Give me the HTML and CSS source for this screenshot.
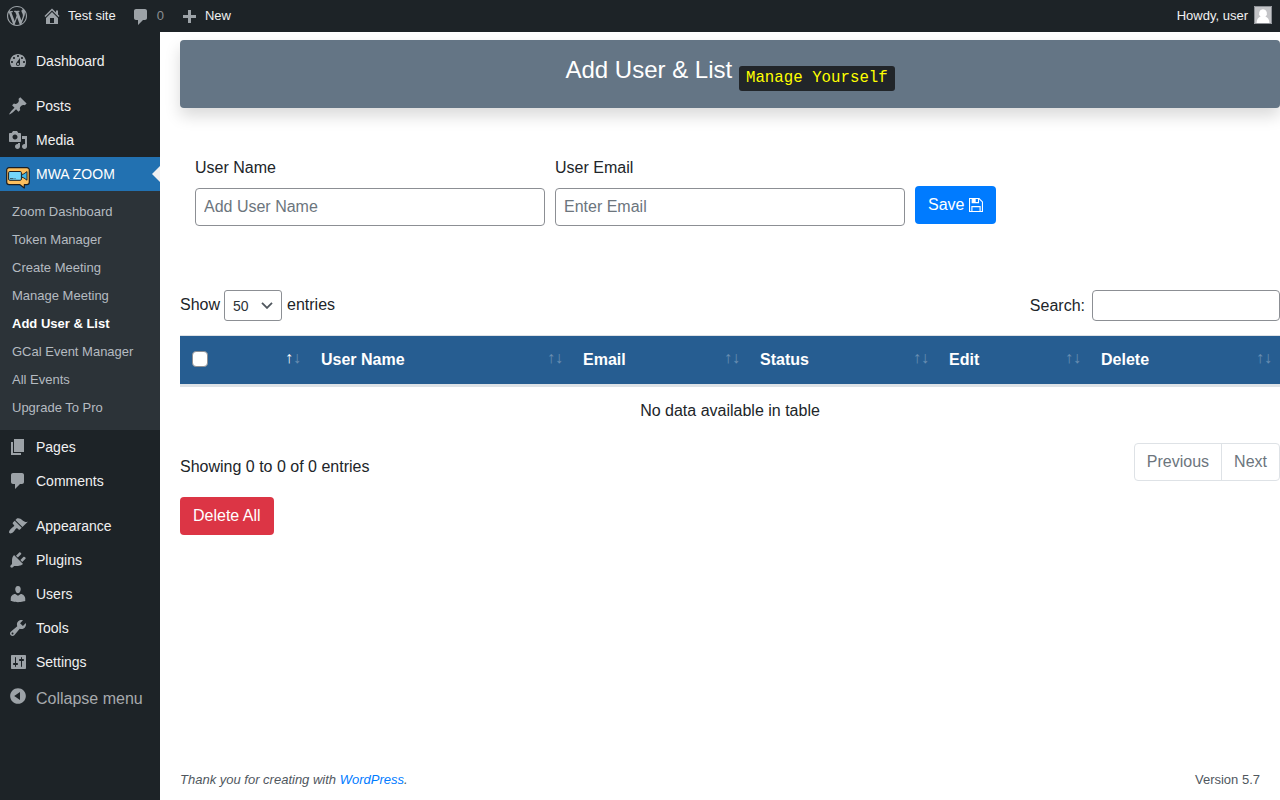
FILE: index.html
```html
<!DOCTYPE html>
<html lang="en">
<head>
<meta charset="utf-8">
<title>Add User &amp; List</title>
<link rel="stylesheet" href="styles.css">
</head>
<body>
<header class="adminbar">
  <div class="bar-left">
    <svg class="icon wp" viewBox="0 0 20 20"><path d="M20 10c0-5.51-4.49-10-10-10C4.48 0 0 4.49 0 10c0 5.52 4.48 10 10 10 5.51 0 10-4.48 10-10zM7.78 15.37L4.37 6.22c.55-.02 1.17-.08 1.17-.08.5-.06.44-1.13-.06-1.11 0 0-1.45.11-2.37.11-.18 0-.37 0-.58-.01C4.12 2.69 6.87 1.11 10 1.11c2.33 0 4.45.87 6.05 2.34-.68-.11-1.65.39-1.65 1.58 0 .74.45 1.36.9 2.1.35.61.55 1.36.55 2.46 0 1.49-1.4 5-1.4 5l-3.03-8.37c.54-.02.82-.17.82-.17.5-.05.44-1.25-.06-1.22 0 0-1.44.12-2.38.12-.87 0-2.33-.12-2.33-.12-.5-.03-.56 1.2-.06 1.22l.92.08 1.26 3.41zM17.41 10c.24-.64.74-1.87.43-4.25.7 1.29 1.05 2.71 1.05 4.25 0 3.29-1.73 6.24-4.4 7.78.97-2.59 1.94-5.2 2.92-7.78zM6.1 18.09C3.12 16.65 1.11 13.53 1.11 10c0-1.3.23-2.48.72-3.59C3.25 10.3 4.67 14.2 6.1 18.09zm4.03-6.63l2.58 6.98c-.86.29-1.76.45-2.71.45-.79 0-1.57-.11-2.29-.33.81-2.38 1.62-4.74 2.42-7.1z"/></svg>
    <a class="bar-item site"><svg class="icon" viewBox="0 0 20 20"><path d="M16 8.5l1.53 1.53-1.06 1.06L10 4.6l-6.47 6.49-1.06-1.06L10 2.5l4 4v-2h2v4zm-6-2.46l6 5.99V18H4v-5.97zM12 17v-5H8v5h4z"/></svg>Test site</a>
    <a class="bar-item count"><svg class="icon" viewBox="0 0 20 20"><path d="M5 2h9c1.1 0 2 .9 2 2v7c0 1.1-.9 2-2 2h-2l-5 5v-5H5c-1.1 0-2-.9-2-2V4c0-1.1.9-2 2-2z"/></svg>0</a>
    <a class="bar-item new"><svg class="icon" viewBox="0 0 20 20"><path d="M17 7v3h-5v5H9v-5H4V7h5V2h3v5h5z"/></svg>New</a>
  </div>
  <div class="bar-right">Howdy, user
    <svg class="avatar" viewBox="0 0 18 18"><path fill="#c3c4c7" d="M0 0h18v18H0z"/><path fill="#fff" d="M9 3.2a3.8 4.1 0 0 1 2.4 7.4c2.6.9 3.8 3 4 6.4H2.6c.2-3.4 1.400-5.500 4-6.400A3.800 4.100 0 0 1 9 3.200z"/><path fill="none" stroke="#8c8f94" d="M.5.5h17v17H.5z"/></svg>
  </div>
</header>
<div class="layout">
<nav class="sidebar">
  <a class="item"><svg class="icon" viewBox="0 0 20 20"><path d="M3.760 16h12.480c1.100-1.370 1.760-3.110 1.760-5 0-4.420-3.580-8-8-8s-8 3.580-8 8c0 1.890.66 3.630 1.760 5zM10 4c.55 0 1 .45 1 1s-.45 1-1 1-1-.45-1-1 .45-1 1-1zM6 6c.55 0 1 .45 1 1s-.45 1-1 1-1-.45-1-1 .45-1 1-1zm8 0c.55 0 1 .45 1 1s-.45 1-1 1-1-.45-1-1 .45-1 1-1zm-5.370 5.550L12 7v6c0 1.100-.9 2-2 2s-2-.9-2-2c0-.57.24-1.080.63-1.450zM4 10c.55 0 1 .45 1 1s-.45 1-1 1-1-.45-1-1 .45-1 1-1zm12 0c.55 0 1 .45 1 1s-.45 1-1 1-1-.45-1-1 .45-1 1-1zm-5 3c0-.55-.45-1-1-1s-1 .45-1 1 .45 1 1 1 1-.45 1-1z"/></svg>Dashboard</a>
  <a class="item gap"><svg class="icon" viewBox="0 0 20 20"><path d="M10.440 3.020l1.820-1.820 6.360 6.350-1.830 1.820c-1.050-.68-2.480-.57-3.410.36l-.75.75c-.92.93-1.040 2.350-.35 3.410l-1.830 1.820-2.410-2.410-2.800 2.790c-.42.42-3.380 2.710-3.800 2.290s1.860-3.390 2.280-3.810l2.790-2.790L4.100 9.360l1.830-1.820c1.050.69 2.480.57 3.400-.36l.75-.75c.93-.92 1.050-2.350.36-3.410z"/></svg>Posts</a>
  <a class="item"><svg class="icon" viewBox="0 0 20 20"><path d="M13 11V4c0-.55-.45-1-1-1h-1.670L9 1H5L3.670 3H2c-.55 0-1 .45-1 1v7c0 .55.45 1 1 1h10c.55 0 1-.45 1-1zM7 4.500c1.380 0 2.500 1.120 2.500 2.500S8.380 9.500 7 9.500 4.500 8.380 4.500 7 5.620 4.500 7 4.500zM14 6h5v10.500c0 1.380-1.120 2.500-2.500 2.500S14 17.880 14 16.500s1.120-2.500 2.500-2.500c.17 0 .34.02.5.05V9h-3V6zm-4 8.050V13h2v3.500c0 1.380-1.120 2.500-2.500 2.500S7 17.880 7 16.500 8.120 14 9.500 14c.17 0 .34.02.5.05z"/></svg>Media</a>
  <a class="item active"><svg class="zoom-icon" viewBox="0 0 24 22"><path fill="#fdbf5e" stroke="#1b1d22" stroke-width="1.200" stroke-linejoin="round" d="M3.100.7h17.800a2.400 2.400 0 0 1 2.400 2.400v12.200a2.400 2.400 0 0 1-2.400 2.400h-2.600v3.200l-4.300-3.200H3.100a2.400 2.400 0 0 1-2.400-2.400V3.100A2.400 2.400 0 0 1 3.100.7z"/><rect x="2.600" y="4.500" width="12.800" height="8.800" rx="1.200" fill="#74d7fb" stroke="#1b1d22"/><path fill="#3db4e7" stroke="#1b1d22" stroke-width=".9" stroke-linejoin="round" d="M15.600 7.600l2.200-.7 3.200-2.300v8.600l-3.200-2.300-2.200-.7z"/><path stroke="#1b1d22" stroke-width=".7" d="M4 11.600h3.500m1 0h1"/></svg>MWA ZOOM</a>
  <div class="submenu">
    <a>Zoom Dashboard</a><a>Token Manager</a><a>Create Meeting</a><a>Manage Meeting</a><a class="current">Add User &amp; List</a><a>GCal Event Manager</a><a>All Events</a><a>Upgrade To Pro</a>
  </div>
  <a class="item"><svg class="icon" viewBox="0 0 20 20"><path d="M6 15V2h10v13H6zm-1 1h8v2H3V5h2v11z"/></svg>Pages</a>
  <a class="item"><svg class="icon" viewBox="0 0 20 20"><path d="M5 2h9c1.100 0 2 .9 2 2v7c0 1.100-.9 2-2 2h-2l-5 5v-5H5c-1.100 0-2-.9-2-2V4c0-1.100.9-2 2-2z"/></svg>Comments</a>
  <a class="item gap"><svg class="icon" viewBox="0 0 20 20"><path d="M14.480 11.060L7.410 3.990l1.500-1.500c.5-.56 2.300-.47 3.510.32 1.210.8 1.430 1.280 2.910 2.100 1.180.64 2.450 1.260 4.450.85zm-.71.71L6.700 4.700 4.930 6.470c-.39.39-.39 1.020 0 1.410l1.060 1.060c.39.39.39 1.030 0 1.420-.6.6-1.430 1.110-2.210 1.690-.35.26-.7.53-1.010.84C1.430 14.230.4 16.080 1.400 17.070c.99 1 2.840-.03 4.180-1.360.31-.31.58-.66.85-1.020.57-.78 1.080-1.610 1.690-2.210.39-.39 1.020-.39 1.410 0l1.060 1.060c.39.39 1.020.39 1.410 0z"/></svg>Appearance</a>
  <a class="item"><svg class="icon" viewBox="0 0 20 20"><path d="M13.110 4.360L9.870 7.600 8 5.730l3.240-3.240c.35-.34 1.050-.2 1.560.32.52.51.66 1.210.31 1.550zm-8 1.770l.91-1.120 9.010 9.010-1.190.84c-.71.71-2.630 1.160-3.820 1.160H6.140L4.900 17.260c-.59.59-1.540.59-2.120 0-.59-.58-.59-1.530 0-2.120l1.240-1.240v-3.880c0-1.130.4-3.190 1.090-3.890zm7.260 3.970l3.240-3.240c.34-.35 1.040-.21 1.550.31.52.51.66 1.210.31 1.550l-3.240 3.250z"/></svg>Plugins</a>
  <a class="item"><svg class="icon" viewBox="0 0 20 20"><path d="M10 9.250c-2.270 0-2.730-3.440-2.730-3.440C7 4.020 7.820 2 9.970 2c2.160 0 2.980 2.020 2.710 3.810 0 0-.41 3.440-2.680 3.440zm0 2.570L12.720 10c2.390 0 4.520 2.330 4.520 4.530v2.490s-3.650 1.130-7.240 1.130c-3.650 0-7.240-1.130-7.240-1.130v-2.490c0-2.250 1.940-4.480 4.470-4.480z"/></svg>Users</a>
  <a class="item"><svg class="icon" viewBox="0 0 20 20"><path d="M16.680 9.770c-1.340 1.340-3.300 1.670-4.950.99l-5.410 6.520c-.99.99-2.590.99-3.580 0s-.99-2.590 0-3.570l6.520-5.420c-.68-1.650-.35-3.610.99-4.950 1.280-1.280 3.120-1.620 4.720-1.060l-2.890 2.890 2.820 2.820 2.860-2.870c.53 1.580.18 3.390-1.080 4.650zM3.810 16.210c.4.39 1.040.39 1.430 0 .4-.4.4-1.040 0-1.430-.39-.4-1.030-.4-1.430 0-.39.39-.39 1.030 0 1.430z"/></svg>Tools</a>
  <a class="item"><svg class="icon" viewBox="0 0 20 20"><path d="M18 16V4c0-.55-.45-1-1-1H4c-.55 0-1 .45-1 1v12c0 .55.45 1 1 1h13c.55 0 1-.45 1-1zM8 11h1c.55 0 1 .45 1 1s-.45 1-1 1H8v1.500c0 .28-.22.5-.5.5s-.5-.22-.5-.5V13H6c-.55 0-1-.45-1-1s.45-1 1-1h1V5.500c0-.28.22-.5.5-.5s.5.22.5.5V11zm5-2h-1c-.55 0-1-.45-1-1s.45-1 1-1h1V5.500c0-.28.22-.5.5-.5s.5.22.5.5V7h1c.55 0 1 .45 1 1s-.45 1-1 1h-1v5.500c0 .28-.22.5-.5.5s-.5-.22-.5-.5V9z"/></svg>Settings</a>
  <a class="item collapse"><svg class="icon" viewBox="0 0 20 20"><path fill-rule="evenodd" d="M10 2.160c4.330 0 7.840 3.510 7.840 7.840s-3.510 7.840-7.840 7.840S2.160 14.330 2.160 10 5.710 2.160 10 2.160zm2 11.720V6.120L6.180 9.970z"/></svg><span>Collapse menu</span></a>
</nav>
<main class="content">
  <h4 class="banner"><span>Add User &amp; List</span><code>Manage Yourself</code></h4>
  <form class="user-form">
    <label class="field">User Name<input type="text" placeholder="Add User Name"></label>
    <label class="field">User Email<input type="text" placeholder="Enter Email"></label>
    <button class="btn save" type="button">Save <svg viewBox="0 0 14 14"><path fill="none" stroke="#fff" stroke-width="1.100" d="M.55.55h9.500l3.400 3.400v9.500H.55zM2.900 13.400V8.600h8.200v4.800M3.200.6v4h6.300v-4"/><path fill="#fff" d="M3.200 1h3.500v3.500H3.200z"/></svg></button>
  </form>
  <div class="controls">
    <div class="length">Show <span class="select">50<svg viewBox="0 0 12 7"><path fill="none" stroke="#50575e" stroke-width="1.800" d="M1 .9l5 5 5-5"/></svg></span> entries</div>
    <label class="search">Search:<input type="text"></label>
  </div>
  <table class="users">
    <colgroup><col class="c1"><col class="c2"><col class="c3"><col class="c4"><col class="c5"><col class="c6"></colgroup>
    <thead><tr>
      <th><span class="check"></span><span class="sort"><i class="on">↑</i><i>↓</i></span></th>
      <th>User Name<span class="sort"><i>↑</i><i>↓</i></span></th>
      <th>Email<span class="sort"><i>↑</i><i>↓</i></span></th>
      <th>Status<span class="sort"><i>↑</i><i>↓</i></span></th>
      <th>Edit<span class="sort"><i>↑</i><i>↓</i></span></th>
      <th>Delete<span class="sort"><i>↑</i><i>↓</i></span></th>
    </tr></thead>
    <tbody><tr><td colspan="6">No data available in table</td></tr></tbody>
  </table>
  <div class="paging">
    <div class="info">Showing 0 to 0 of 0 entries</div>
    <div class="pages"><a>Previous</a><a>Next</a></div>
  </div>
  <button class="btn danger" type="button">Delete All</button>
  <footer class="footer"><em>Thank you for creating with <a>WordPress</a>.</em><span>Version 5.7</span></footer>
</main>
</div>
</body>
</html>
```

FILE: styles.css
```css
* { box-sizing: border-box; }
body {
  margin: 0;
  height: 800px;
  display: flex;
  flex-direction: column;
  overflow: hidden;
  background: #fff;
  color: #212529;
  font: 16px/24px "Liberation Sans", Arial, sans-serif;
}
.icon { width: 20px; height: 20px; fill: #9ca2a7; flex: none; }

/* Top bar */
.adminbar {
  flex: none;
  height: 32px;
  padding: 0 8px 0 7px;
  display: flex;
  justify-content: space-between;
  background: #1d2327;
  color: #f0f0f1;
  font-size: 13px;
  line-height: 32px;
}
.bar-left, .bar-item, .bar-right { display: flex; }
.wp { margin-top: 6px; }
.bar-item .icon { margin: 6px 6px 0 0; }
.site { margin-left: 15px; }
.count { margin-left: 15px; color: #8a8e92; }
.bar-item.count .icon { margin-top: 7px; }
.new { margin-left: 15px; }
.bar-item.new .icon { margin-top: 8px; }
.avatar { width: 18px; height: 18px; margin: 6px 0 0 6px; }

/* Navigation */
.layout { flex: 1; min-height: 0; display: flex; }
.sidebar {
  flex: none;
  width: 160px;
  padding-top: 12px;
  background: #1d2327;
  color: #f0f0f1;
  font-size: 14px;
}
.item { height: 34px; display: flex; line-height: 34px; }
.item .icon { margin: 7px 8px 0; }
.gap { margin-top: 11px; }
.active { position: relative; background: #2271b1; color: #fff; }
.active::after {
  content: "";
  position: absolute;
  right: 0;
  top: 9px;
  border: 8px solid transparent;
  border-right-color: #f0f0f1;
  border-left-width: 0;
}
.zoom-icon { width: 24px; height: 22px; margin: 10px 6px 0; }
.submenu { height: 239px; padding-top: 7px; background: #2c3338; }
.submenu a {
  display: block;
  height: 28px;
  padding-left: 12px;
  font-size: 13px;
  line-height: 28px;
  color: #b5bbc1;
}
.submenu .current { color: #fff; font-weight: bold; }
.collapse { color: #a7aaad; font-size: 16px; line-height: 40px; }

/* Content */
.content {
  flex: 1;
  min-width: 0;
  padding: 8px 0 0 20px;
  display: flex;
  flex-direction: column;
}
.banner {
  flex: none;
  height: 68px;
  margin: 0;
  display: flex;
  justify-content: center;
  gap: 7px;
  padding-top: 15px;
  border-radius: 4px;
  background: #647585;
  box-shadow: 0 8px 16px rgba(0, 0, 0, .15);
  color: #fff;
  font-size: 24px;
  font-weight: 400;
  line-height: 29px;
}
.banner code {
  height: 25px;
  margin-top: 11px;
  padding: 0 6.800px;
  border-radius: 3px;
  background: #212529;
  color: #ff0;
  font: 15.75px/24px "Liberation Mono", monospace;
}
.user-form {
  height: 182px;
  display: flex;
  gap: 10px;
  padding: 48px 0 0 15px;
}
.field { width: 350px; display: flex; flex-direction: column; gap: 8px; }
input {
  border: 1px solid #8c8f94;
  border-radius: 4px;
  background: #fff;
  color: #495057;
  font: 16px "Liberation Sans", Arial, sans-serif;
}
.field input { height: 38px; padding: 0 8px; }
input::placeholder { color: #6c757d; opacity: 1; }
.btn {
  height: 38px;
  padding: 0 13px;
  border: 0;
  border-radius: 4px;
  color: #fff;
  font: 16px/38px "Liberation Sans", Arial, sans-serif;
}
.save {
  width: 81px;
  margin-top: 30px;
  display: flex;
  align-items: center;
  gap: 4.500px;
  padding-right: 0;
  background: #007bff;
}
.save svg { width: 14px; height: 14px; flex: none; }
.controls { height: 45px; display: flex; justify-content: space-between; }
.length { display: flex; gap: 4px; line-height: 30px; }
.select {
  width: 58px;
  height: 31px;
  margin-right: 1px;
  padding: 0 8px;
  display: flex;
  align-items: center;
  justify-content: space-between;
  border: 1px solid #8c8f94;
  border-radius: 3px;
  color: #2c3338;
  font-size: 14px;
}
.select svg { width: 12px; height: 7px; }
.search { display: flex; gap: 7px; line-height: 31px; }
.search input { width: 188px; height: 31px; }

/* Table */
.users { width: 1100px; table-layout: fixed; border-collapse: separate; border-spacing: 0; }
.c1 { width: 129px; }
.c2 { width: 262px; }
.c3 { width: 177px; }
.c4 { width: 189px; }
.c5 { width: 152px; }
.c6 { width: 191px; }
.users th {
  position: relative;
  height: 52px;
  padding: 0 12px;
  border-top: 1px solid #dee2e6;
  border-bottom: 3px solid #dee2e6;
  background: #265d91;
  color: #fff;
  text-align: left;
}
.check {
  display: block;
  width: 16px;
  height: 16px;
  margin-top: -2px;
  border: 1px solid #8c8f94;
  border-radius: 4px;
  background: #fff;
}
.sort { position: absolute; right: 8px; top: 10px; display: flex; font-weight: 400; }
.sort i { width: 8px; font-style: normal; opacity: .3; }
.sort .on { opacity: 1; }
.users td { height: 48px; padding: 0; text-align: center; }
.paging { display: flex; justify-content: space-between; margin-top: 8px; }
.info { padding-top: 12px; }
.pages {
  height: 38px;
  display: flex;
  border: 1px solid #dee2e6;
  border-radius: 4px;
  color: #6c757d;
  line-height: 36px;
}
.pages a { padding: 0 12px; }
.pages a + a { border-left: 1px solid #dee2e6; }
.danger { align-self: flex-start; margin-top: 16px; background: #dc3545; }
.footer {
  display: flex;
  justify-content: space-between;
  margin-top: auto;
  padding: 0 20px 8px 0;
  color: #50575e;
  font-size: 13px;
}
.footer a { color: #007bff; }
```
